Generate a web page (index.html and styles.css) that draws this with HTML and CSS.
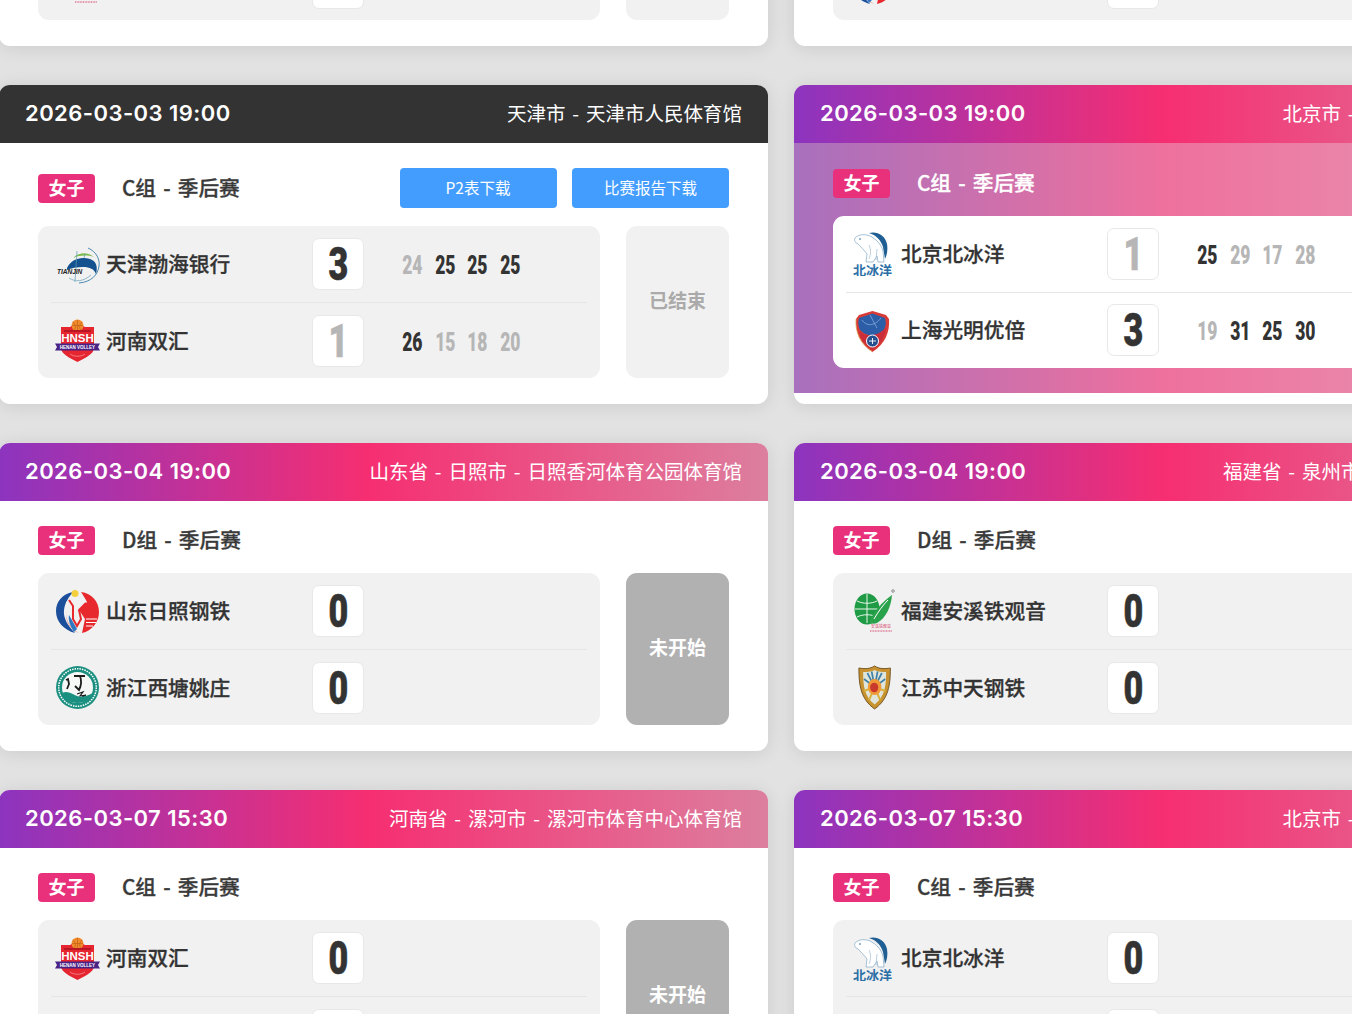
FILE: index.html
```html
<!DOCTYPE html>
<html lang="zh-CN">
<head>
<meta charset="utf-8">
<title>赛程</title>
<link rel="stylesheet" href="styles.css">
</head>
<body>
<svg class="defs" aria-hidden="true">
  <symbol id="tianjin" viewBox="0 0 45 45">
    <path d="M33 6C42 10 45 18 44 24C43 33 36 40 24 41" fill="none" stroke="#3b7ea8" stroke-width=".9"/>
    <path d="M12 26C16 17 26 14 35 17C41 19 43 24 41 32C39 27 35 25 28 25C22 25 16 26 12 28Z" fill="#14528f"/>
    <path d="M18 16C24 10 33 10 39 15C33 13 25 13 18 16Z" fill="#7dbb4a"/>
    <path d="M22 9L20 40M30 12L29 16" stroke="#5b9bb8" stroke-width=".7"/>
    <path d="M14 36C20 40 28 40 36 33" fill="none" stroke="#8fb9cc" stroke-width="1"/>
    <text x="2" y="31.500" class="logo-tj">TIANJIN</text>
  </symbol>
  <symbol id="henan" viewBox="0 0 45 45">
    <path d="M6 9H15L22 5L30 9H39V30C39 36 30 40 22.500 44C15 40 6 36 6 30Z" fill="#e5252f"/>
    <circle cx="22.500" cy="7.500" r="6" fill="#f08a2c"/>
    <path d="M17 7.500H28M22.500 2V13M18 4C21 7 21 10 19 12M27 4C24 7 24 10 26 12" stroke="#b85c14" stroke-width=".6" fill="none"/>
    <path d="M9 12H36V14H9Z" fill="#b81622"/>
    <text x="22.500" y="24" class="logo-hn">HNSH</text>
    <path d="M0 25.500H45L43 29L45 32.500H0L2 29Z" fill="#4a2386"/>
    <text x="22.500" y="30.800" class="logo-hn-sub">HENAN VOLLEY</text>
    <path d="M15 36C19 39 26 39 30 36" stroke="#f7a0a0" stroke-width=".7" fill="none"/>
  </symbol>
  <symbol id="beijing" viewBox="0 0 45 45">
    <path d="M19 2C27 0 35 4 37 13C38 19 37 24 35 28L33 16C31 9 26 4 19 2Z" fill="#1f5f94"/>
    <path d="M5 7C9 3 15 3 20 5C26 8 31 13 33 20L34 31H28L27 25L23 31H16L17 23C14 19 10 15 8 13C5 12 4 9 5 7Z" fill="#fff" stroke="#7fa8c4" stroke-width=".7"/>
    <path d="M19 14C21 18 21 23 19 28M27 18L26 29" stroke="#a9c3d6" stroke-width=".8" fill="none"/>
    <circle cx="10" cy="8" r=".8" fill="#1f5f94"/>
    <text x="22.500" y="44" class="logo-bj">北冰洋</text>
  </symbol>
  <symbol id="shanghai" viewBox="0 0 45 45">
    <path d="M22.500 3L36 7L39 11C40 24 35 36 22.500 44C10 36 5 24 6 11L9 7Z" fill="#d93a36"/>
    <path d="M22.500 5.500L35 10C37 17 35 22 30 25C24 29 15 28 10 22C8 18 8 14 9 10Z" fill="#2c5ea8"/>
    <path d="M12 12C16 18 24 19 31 10M20 7L27 20" stroke="#8fb3dd" stroke-width=".7" fill="none"/>
    <path d="M9 23C16 30 26 29 36 20C35 29 30 37 22.500 42C15 37 10 30 9 23Z" fill="#c92e3a"/>
    <circle cx="22.500" cy="33" r="6" fill="#24508f" stroke="#fff" stroke-width="1"/>
    <path d="M19 33H26M22.500 30V36" stroke="#fff" stroke-width=".9"/>
    <path d="M22.500 44C10 36 5 24 6 11" fill="none" stroke="#d9b45c" stroke-width=".7"/>
  </symbol>
  <symbol id="shandong" viewBox="0 0 45 45">
    <path d="M18 3C7 5 1 13 1 22C1 33 9 41 20 44C13 37 8 29 9 21C10 13 14 8 18 3Z" fill="#1b4f9c"/>
    <path d="M11 24C11 32 16 39 24 44C17 42 10 34 11 24Z" fill="#e9a6a0"/>
    <path d="M26 3C37 4 44 13 44 23C44 33 37 42 27 44L30 30L24 21L32 13C30 9 28 6 26 3Z" fill="#e7282c"/>
    <circle cx="20" cy="4.500" r="3.500" fill="#f4d03f"/>
    <path d="M14 11L18 17L18 30L22 37L26 30L24 21L31 14" fill="none" stroke="#e7282c" stroke-width="2"/>
    <path d="M31 30H42M31 33.500H41M31 37H38" stroke="#fff" stroke-width="1.200"/>
    <path d="M14 26L22 40L19 43C15 37 13 31 14 26Z" fill="#2e77c2"/>
  </symbol>
  <symbol id="zhejiang" viewBox="0 0 45 45">
    <circle cx="22.500" cy="22.500" r="21.500" fill="#1b8f80"/>
    <circle cx="22.500" cy="22.500" r="18.800" fill="none" stroke="#fff" stroke-width="1.500" stroke-dasharray="1.500 1"/>
    <circle cx="22.500" cy="22.500" r="15.500" fill="#f5f8f6"/>
    <path d="M19 11H30M25 11C27 16 26 21 24 25C22 23 21 22 20 21M11 15L13 14L14 19L12 24" fill="none" stroke="#1c1c1c" stroke-width="1.800"/>
    <path d="M22 29L28 27L25 31L31 30L24 34" fill="none" stroke="#1c1c1c" stroke-width="1.200"/>
    <path d="M7 28C13 25 17 29 22 31C26 33 32 31 38 28C37 34 30 38 22.500 38C15 38 9 34 7 28Z" fill="#1b8f80"/>
  </symbol>
  <symbol id="fujian" viewBox="0 0 45 45">
    <ellipse cx="17" cy="20" rx="12.500" ry="15.500" fill="#1f9a45"/>
    <path d="M17 5V34M5 20H29M7 12C13 15 21 15 27 12M7 28C13 25 21 25 27 28" stroke="#eaf6ec" stroke-width="1" fill="none"/>
    <path d="M19 33C24 22 32 13 42 6C41 18 36 29 27 34C24 35 21 35 19 33Z" fill="#2aa24c"/>
    <path d="M24 30C28 23 33 16 38 11" stroke="#fff" stroke-width="1" fill="none"/>
    <circle cx="43" cy="2" r="1.300" fill="none" stroke="#333" stroke-width=".5"/>
    <text x="21" y="39" class="logo-fj">安溪铁观音</text>
    <path d="M20 42H42" stroke="#d8456a" stroke-width="1.200" stroke-dasharray="1 .6"/>
  </symbol>
  <symbol id="jiangsu" viewBox="0 0 45 45">
    <g transform="translate(5.500 0) scale(.85 1)">
      <path d="M22.500 1C28 4 34 4 41 3C41 20 39 34 22.500 44C6 34 4 20 4 3C11 4 17 4 22.500 1Z" fill="#c8922f" stroke="#6e4f1e" stroke-width="1"/>
      <path d="M22.500 5C27 7 32 7 36 7C36 20 35 31 22.500 39.500C10 31 9 20 9 7C13 7 18 7 22.500 5Z" fill="#dfe5da"/>
      <path d="M22.500 22L14 8M22.500 22L19 6.500M22.500 22L26 6.500M22.500 22L31 8M22.500 22L35 14M22.500 22L10 14" stroke="#3f80a8" stroke-width="2"/>
      <path d="M22.500 22L10 26M22.500 22L35 26M22.500 22L16 35M22.500 22L29 35" stroke="#d8b13a" stroke-width="2.200"/>
      <circle cx="22.500" cy="22" r="8" fill="#ef9a36"/>
      <circle cx="22" cy="22.500" r="4.800" fill="#c9392c"/>
    </g>
  </symbol>
</svg>

<main class="schedule">

  <article class="card">
    <header class="card-head head-gradient"><time class="date">2026-03-02 19:00</time><span class="venue">福建省 - 泉州市 - 安溪县体育中心馆</span></header>
    <div class="card-body">
      <div class="meta"><span class="tag">女子</span><span class="stage">C组 - 季后赛</span></div>
      <div class="match">
        <div class="teams">
          <div class="team"><svg class="logo"><use href="#jiangsu"/></svg><span class="name">江苏中天钢铁</span><span class="total is-lose"><b>1</b></span><div class="sets"><span class="set is-win"><b>25</b></span><span class="set"><b>19</b></span><span class="set"><b>20</b></span><span class="set"><b>21</b></span></div></div>
          <div class="team"><svg class="logo"><use href="#fujian"/></svg><span class="name">福建安溪铁观音</span><span class="total"><b>3</b></span><div class="sets"><span class="set"><b>22</b></span><span class="set is-win"><b>25</b></span><span class="set is-win"><b>25</b></span><span class="set is-win"><b>25</b></span></div></div>
        </div>
        <div class="status">已结束</div>
      </div>
    </div>
  </article>

  <article class="card">
    <header class="card-head head-gradient"><time class="date">2026-03-02 19:00</time><span class="venue">山东省 - 日照市 - 日照香河体育公园体育馆</span></header>
    <div class="card-body">
      <div class="meta"><span class="tag">女子</span><span class="stage">D组 - 季后赛</span></div>
      <div class="match">
        <div class="teams">
          <div class="team"><svg class="logo"><use href="#zhejiang"/></svg><span class="name">浙江西塘姚庄</span><span class="total"><b>3</b></span><div class="sets"><span class="set is-win"><b>25</b></span><span class="set is-win"><b>25</b></span><span class="set is-win"><b>25</b></span></div></div>
          <div class="team"><svg class="logo"><use href="#shandong"/></svg><span class="name">山东日照钢铁</span><span class="total is-lose"><b>0</b></span><div class="sets"><span class="set"><b>20</b></span><span class="set"><b>18</b></span><span class="set"><b>22</b></span></div></div>
        </div>
        <div class="status">已结束</div>
      </div>
    </div>
  </article>

  <article class="card">
    <header class="card-head head-dark"><time class="date">2026-03-03 19:00</time><span class="venue">天津市 - 天津市人民体育馆</span></header>
    <div class="card-body">
      <div class="meta">
        <span class="tag">女子</span><span class="stage">C组 - 季后赛</span>
        <div class="actions"><a class="btn">P2表下载</a><a class="btn">比赛报告下载</a></div>
      </div>
      <div class="match">
        <div class="teams">
          <div class="team"><svg class="logo"><use href="#tianjin"/></svg><span class="name">天津渤海银行</span><span class="total"><b>3</b></span><div class="sets"><span class="set"><b>24</b></span><span class="set is-win"><b>25</b></span><span class="set is-win"><b>25</b></span><span class="set is-win"><b>25</b></span></div></div>
          <div class="team"><svg class="logo"><use href="#henan"/></svg><span class="name">河南双汇</span><span class="total is-lose"><b>1</b></span><div class="sets"><span class="set is-win"><b>26</b></span><span class="set"><b>15</b></span><span class="set"><b>18</b></span><span class="set"><b>20</b></span></div></div>
        </div>
        <div class="status">已结束</div>
      </div>
    </div>
  </article>

  <article class="card">
    <header class="card-head head-gradient"><time class="date">2026-03-03 19:00</time><span class="venue">北京市 - 北京市首钢园篮球馆</span></header>
    <div class="card-body body-live">
      <div class="meta"><span class="tag">女子</span><span class="stage">C组 - 季后赛</span></div>
      <div class="match">
        <div class="teams teams-live">
          <div class="team"><svg class="logo"><use href="#beijing"/></svg><span class="name">北京北冰洋</span><span class="total is-lose"><b>1</b></span><div class="sets"><span class="set is-win"><b>25</b></span><span class="set"><b>29</b></span><span class="set"><b>17</b></span><span class="set"><b>28</b></span></div></div>
          <div class="team"><svg class="logo"><use href="#shanghai"/></svg><span class="name">上海光明优倍</span><span class="total"><b>3</b></span><div class="sets"><span class="set"><b>19</b></span><span class="set is-win"><b>31</b></span><span class="set is-win"><b>25</b></span><span class="set is-win"><b>30</b></span></div></div>
        </div>
        <div class="status">已结束</div>
      </div>
    </div>
  </article>

  <article class="card">
    <header class="card-head head-gradient"><time class="date">2026-03-04 19:00</time><span class="venue">山东省 - 日照市 - 日照香河体育公园体育馆</span></header>
    <div class="card-body">
      <div class="meta"><span class="tag">女子</span><span class="stage">D组 - 季后赛</span></div>
      <div class="match">
        <div class="teams">
          <div class="team"><svg class="logo"><use href="#shandong"/></svg><span class="name">山东日照钢铁</span><span class="total"><b>0</b></span></div>
          <div class="team"><svg class="logo"><use href="#zhejiang"/></svg><span class="name">浙江西塘姚庄</span><span class="total"><b>0</b></span></div>
        </div>
        <div class="status status-wait">未开始</div>
      </div>
    </div>
  </article>

  <article class="card">
    <header class="card-head head-gradient"><time class="date">2026-03-04 19:00</time><span class="venue">福建省 - 泉州市 - 安溪县体育中心馆</span></header>
    <div class="card-body">
      <div class="meta"><span class="tag">女子</span><span class="stage">D组 - 季后赛</span></div>
      <div class="match">
        <div class="teams">
          <div class="team"><svg class="logo"><use href="#fujian"/></svg><span class="name">福建安溪铁观音</span><span class="total"><b>0</b></span></div>
          <div class="team"><svg class="logo"><use href="#jiangsu"/></svg><span class="name">江苏中天钢铁</span><span class="total"><b>0</b></span></div>
        </div>
        <div class="status status-wait">未开始</div>
      </div>
    </div>
  </article>

  <article class="card">
    <header class="card-head head-gradient"><time class="date">2026-03-07 15:30</time><span class="venue">河南省 - 漯河市 - 漯河市体育中心体育馆</span></header>
    <div class="card-body">
      <div class="meta"><span class="tag">女子</span><span class="stage">C组 - 季后赛</span></div>
      <div class="match">
        <div class="teams">
          <div class="team"><svg class="logo"><use href="#henan"/></svg><span class="name">河南双汇</span><span class="total"><b>0</b></span></div>
          <div class="team"><svg class="logo"><use href="#tianjin"/></svg><span class="name">天津渤海银行</span><span class="total"><b>0</b></span></div>
        </div>
        <div class="status status-wait">未开始</div>
      </div>
    </div>
  </article>

  <article class="card">
    <header class="card-head head-gradient"><time class="date">2026-03-07 15:30</time><span class="venue">北京市 - 北京市首钢园篮球馆</span></header>
    <div class="card-body">
      <div class="meta"><span class="tag">女子</span><span class="stage">C组 - 季后赛</span></div>
      <div class="match">
        <div class="teams">
          <div class="team"><svg class="logo"><use href="#beijing"/></svg><span class="name">北京北冰洋</span><span class="total"><b>0</b></span></div>
          <div class="team"><svg class="logo"><use href="#shanghai"/></svg><span class="name">上海光明优倍</span><span class="total"><b>0</b></span></div>
        </div>
        <div class="status status-wait">未开始</div>
      </div>
    </div>
  </article>

</main>
</body>
</html>
```

FILE: styles.css
```css
* { box-sizing: border-box; }

html, body {
  height: 1014px;
  margin: 0;
  overflow: hidden;
}

body {
  background: #e2e2e2;
  color: #333;
  font-family: "Inter", "Noto Sans CJK SC", sans-serif;
}

.defs {
  position: absolute;
  width: 0;
  height: 0;
}

.schedule {
  display: grid;
  grid-template-columns: 769px 769px;
  column-gap: 26px;
  row-gap: 39.5px;
  margin-top: -262px;
  margin-left: -1px;
}

.card {
  background: #fff;
  border-radius: 11px;
  box-shadow: 0 2px 18px rgba(0, 0, 0, .1);
  overflow: hidden;
}

.card-head {
  display: flex;
  align-items: center;
  justify-content: space-between;
  height: 57.5px;
  padding: 0 26px 2px 26px;
  color: #fff;
}

.head-dark { background: #333; }

.head-gradient {
  background: linear-gradient(90deg, #8c34bf 0%, #f62e71 48%, #dc7f9f 100%);
}

.date {
  font-size: 22px;
  font-weight: 600;
  letter-spacing: .45px;
  white-space: nowrap;
}

.venue {
  font-family: "Noto Sans CJK SC", sans-serif;
  font-size: 19.500px;
  font-weight: 400;
  word-spacing: 2.500px;
  white-space: nowrap;
}

.card-body { padding: 25.500px 39px; }

.body-live {
  padding-top: 26px;
  background: linear-gradient(90deg, #a870bd 0%, #ee709d 48%, #e69ab6 100%);
}

.body-live .stage {
  color: #fff;
  -webkit-text-stroke-color: #fff;
}

.meta {
  display: flex;
  align-items: center;
  min-height: 29px;
  margin-bottom: 18px;
}

.tag {
  width: 57px;
  height: 29px;
  margin-right: 27px;
  border-radius: 4px;
  background: #e8317a;
  color: #fff;
  font-family: "Noto Sans CJK SC", sans-serif;
  font-size: 18px;
  font-weight: 700;
  line-height: 27px;
  text-align: center;
}

.stage {
  padding-bottom: 2px;
  font-family: "Noto Sans CJK SC", sans-serif;
  font-size: 20.700px;
  font-weight: 500;
  line-height: 25px;
  word-spacing: 2.500px;
  color: #3a3a3a;
  -webkit-text-stroke: .3px #3a3a3a;
}

.actions {
  display: flex;
  gap: 15.500px;
  margin-left: auto;
}

.btn {
  display: block;
  width: 157px;
  height: 40px;
  border-radius: 4px;
  background: #439dff;
  color: #fff;
  font-family: "Noto Sans CJK SC", sans-serif;
  font-size: 15.500px;
  line-height: 38px;
  text-align: center;
}

.match {
  display: flex;
  gap: 26px;
  height: 152px;
}

.teams {
  flex: none;
  width: 562px;
  padding: 0 13px;
  border-radius: 11px;
  background: #f1f1f1;
}

.teams-live { background: #fff; }

.team {
  display: flex;
  align-items: center;
  height: 76px;
}

.team + .team { border-top: 1px solid #e6e6e6; }

.logo {
  flex: none;
  width: 45px;
  height: 45px;
  margin-left: 4px;
}

.name {
  flex: none;
  width: 212px;
  padding-bottom: 2px;
  padding-left: 6px;
  font-family: "Noto Sans CJK SC", sans-serif;
  font-size: 20.700px;
  font-weight: 500;
  color: #333;
  white-space: nowrap;
  -webkit-text-stroke: .3px #333;
}

.total {
  display: flex;
  flex: none;
  align-items: center;
  justify-content: center;
  width: 52px;
  height: 52px;
  border: 1px solid #e8e8e8;
  border-radius: 7px;
  background: #fff;
  color: #333;
  font-family: "Roboto", sans-serif;
  font-size: 46px;
  font-weight: 900;
  line-height: 1;
}

.total b {
  display: block;
  font-weight: 900;
  transform: scaleX(.74);
  -webkit-text-stroke: .6px currentColor;
}

.total.is-lose { color: #b6b6b6; }

.sets {
  display: flex;
  margin-left: 32px;
  padding-top: 3px;
}

.set {
  width: 32.700px;
  color: #b6b6b6;
  font-family: "Roboto", sans-serif;
  font-size: 25px;
  line-height: 1;
  text-align: center;
}

.set b {
  display: block;
  font-weight: 900;
  transform: scaleX(.7);
}

.set.is-win { color: #333; }

.status {
  display: flex;
  flex: none;
  align-items: center;
  justify-content: center;
  width: 103px;
  padding-bottom: 5px;
  border-radius: 11px;
  background: #f1f1f1;
  color: #aaa;
  font-family: "Noto Sans CJK SC", sans-serif;
  font-size: 19px;
  font-weight: 700;
}

.status-wait {
  background: #b1b1b1;
  color: #fff;
}

.logo-tj {
  font-family: "Liberation Sans", sans-serif;
  font-size: 6.500px;
  font-weight: 700;
  font-style: italic;
  fill: #222;
}

.logo-hn {
  font-family: "Liberation Sans", sans-serif;
  font-size: 11.500px;
  font-weight: 700;
  fill: #fff;
  text-anchor: middle;
}

.logo-hn-sub {
  font-family: "Liberation Sans", sans-serif;
  font-size: 4.500px;
  font-weight: 700;
  fill: #fff;
  text-anchor: middle;
}

.logo-bj {
  font-family: "Noto Sans CJK SC", sans-serif;
  font-size: 13px;
  font-weight: 700;
  fill: #2c6fa6;
  text-anchor: middle;
}

.logo-fj {
  font-family: "Noto Sans CJK SC", sans-serif;
  font-size: 4px;
  fill: #d8456a;
}
```
